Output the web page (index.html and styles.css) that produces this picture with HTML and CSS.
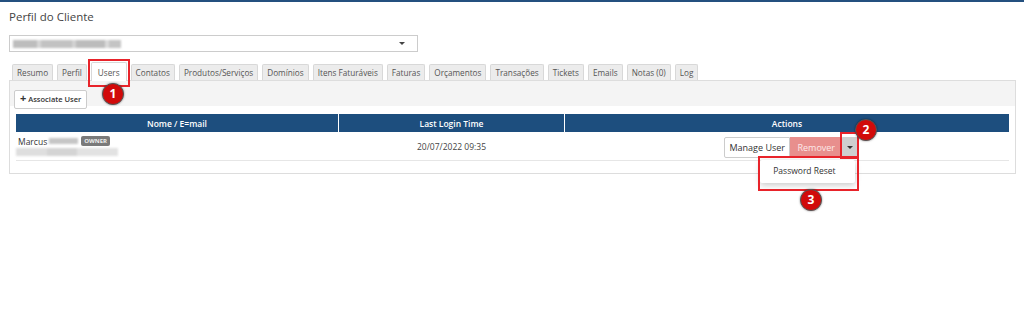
FILE: index.html
```html
<!DOCTYPE html>
<html lang="pt">
<head>
    <meta charset="UTF-8">
    <title>Perfil do Cliente</title>
    <link rel="stylesheet" href="styles.css">
</head>
<body>

    <div class="topline"></div>

    <div class="page">
        <h1 class="page-title">Perfil do Cliente</h1>

        <div class="client-select">
            <span class="blur blur-client"></span>
            <span class="select-caret"></span>
        </div>

        <ul class="tabs">
            <li>Resumo</li>
            <li>Perfil</li>
            <li class="active">Users</li>
            <li>Contatos</li>
            <li>Produtos/Serviços</li>
            <li>Domínios</li>
            <li>Itens Faturáveis</li>
            <li>Faturas</li>
            <li>Orçamentos</li>
            <li>Transações</li>
            <li>Tickets</li>
            <li>Emails</li>
            <li>Notas (0)</li>
            <li>Log</li>
        </ul>

        <div class="tab-pane">
            <div class="toolbar">
                <button class="btn-assoc"><span class="plus">+</span> Associate User</button>
            </div>

            <div class="pane-body">
                <table class="users-table">
                    <thead>
                        <tr>
                            <th class="col-name">Nome / E=mail</th>
                            <th class="col-date">Last Login Time</th>
                            <th>Actions</th>
                        </tr>
                    </thead>
                    <tbody>
                        <tr>
                            <td class="user-cell">
                                <div class="user-line">
                                    Marcus <span class="blur blur-surname"></span>
                                    <span class="badge">OWNER</span>
                                </div>
                                <div class="blur blur-email"></div>
                            </td>
                            <td class="date-cell">20/07/2022 09:35</td>
                            <td class="actions-cell">
                                <div class="btn-group">
                                    <button class="btn btn-manage">Manage User</button>
                                    <button class="btn btn-remove">Remover</button>
                                    <button class="btn btn-caret"><span class="caret"></span></button>
                                    <ul class="dropdown">
                                        <li>Password Reset</li>
                                    </ul>
                                </div>
                            </td>
                        </tr>
                    </tbody>
                </table>
            </div>
        </div>
    </div>

    <!-- annotations -->
    <div class="mark-box box-1"></div>
    <div class="mark-box box-2"></div>
    <div class="mark-box box-3"></div>
    <div class="mark-num num-1">1</div>
    <div class="mark-num num-2">2</div>
    <div class="mark-num num-3">3</div>

</body>
</html>
```

FILE: styles.css
```css
body {
    font-family: 'Open Sans', 'Liberation Sans', sans-serif;
    background: #fff;
    color: #333;
    margin: 0;
    position: relative;
    height: 320px;
    overflow: hidden;
}

.topline {
    height: 2px;
    background: #24507f;
}

.page {
    padding: 0 8px 0 9px;
}

.page-title {
    font-size: 11.5px;
    font-weight: normal;
    color: #444;
    line-height: 18px;
    margin: 6px 0 9px;
}

.client-select {
    width: 392px;
    height: 15px;
    border: 1px solid #ccc;
    display: flex;
    align-items: center;
    justify-content: space-between;
    padding: 0 12px 0 3px;
}

.blur {
    display: inline-block;
    background: #cfcfcf;
    filter: blur(1.2px);
}

.blur-client {
    width: 108px;
    height: 8px;
    background: linear-gradient(to right, #bdbdbd 0 22%, #d6d6d6 22% 26%, #c2c2c2 26% 55%, #d2d2d2 55% 58%, #bcbcbc 58% 85%, #dadada 85% 89%, #c4c4c4 89%);
}

.select-caret {
    width: 0;
    height: 0;
    border-left: 3px solid transparent;
    border-right: 3px solid transparent;
    border-top: 3px solid #444;
}

.tabs {
    list-style: none;
    margin: 10px 0 0;
    padding: 0 0 0 3px;
    display: flex;
    align-items: flex-end;
    gap: 4px;
    position: relative;
    z-index: 1;
}

.tabs li {
    font-size: 8.2px;
    color: #555;
    background: #ececec;
    border: 1px solid #d8d8d8;
    border-bottom: none;
    border-radius: 2px 2px 0 0;
    height: 15px;
    line-height: 16px;
    padding: 0 4px;
}

.tabs li.active {
    background: #fff;
    height: 18px;
    line-height: 20px;
    margin-bottom: -1px;
    padding: 0 6px;
}

.tab-pane {
    border: 1px solid #ddd;
}

.toolbar {
    background: #f4f4f4;
    padding: 4px 4px 2px;
    height: 19px;
}

.btn-assoc {
    font-family: inherit;
    font-size: 7.5px;
    font-weight: 600;
    color: #333;
    background: #fff;
    border: 1px solid #ccc;
    border-radius: 2px;
    height: 19px;
    padding: 0 5px 0 5px;
}

.btn-assoc .plus {
    font-weight: bold;
    font-size: 11px;
    line-height: 8px;
}

.pane-body {
    padding: 8px 6px 12px;
}

.users-table {
    width: 100%;
    border-collapse: collapse;
}

.users-table th {
    background: #1d4e7e;
    color: #fff;
    font-size: 8.5px;
    font-weight: 600;
    height: 18px;
    padding: 0;
    border-left: 1px solid #fff;
}

.users-table th:first-child {
    border-left: none;
}

.col-name {
    width: 322px;
}

.col-date {
    width: 225px;
}

.users-table td {
    height: 28px;
    border-bottom: 1px solid #e6e6e6;
    padding: 0;
}

.user-cell {
    padding-left: 2px !important;
    vertical-align: top;
}

.user-line {
    font-size: 8.5px;
    margin-top: 4px;
    display: flex;
    align-items: center;
    gap: 2px;
    height: 10px;
}

.blur-surname {
    width: 29px;
    height: 6px;
    background: #c6c6c6;
}

.badge {
    background: #7a7a7a;
    color: #eee;
    font-size: 6px;
    font-weight: bold;
    padding: 2px 3px;
    border-radius: 2px;
    line-height: 6px;
    margin-left: 1px;
}

.blur-email {
    display: block;
    width: 102px;
    height: 8px;
    margin-top: 2px;
    margin-left: -2px;
    background: linear-gradient(to right, #dedede 0 30%, #d4d4d4 30% 60%, #e2e2e2 60%);
}

.date-cell {
    text-align: center;
    font-size: 8.5px;
    color: #444;
}

.actions-cell {
    text-align: center;
    padding-left: 9px !important;
}

.btn-group {
    display: inline-flex;
    position: relative;
    vertical-align: middle;
}

.btn {
    font-family: inherit;
    font-size: 9px;
    height: 21px;
    border: 1px solid #ccc;
    margin: 0;
    padding: 0;
    white-space: nowrap;
}

.btn-manage {
    background: #fff;
    color: #333;
    border-radius: 2px 0 0 2px;
    width: 66px;
}

.btn-remove {
    background: #e88f8d;
    border-color: #e88f8d;
    color: #fde9e9;
    width: 52px;
}

.btn-caret {
    background: #cfcfcf;
    border-color: #cfcfcf;
    width: 16px;
    border-radius: 0 2px 2px 0;
    display: flex;
    align-items: center;
    justify-content: center;
}

.caret {
    width: 0;
    height: 0;
    border-left: 3px solid transparent;
    border-right: 3px solid transparent;
    border-top: 3px solid #333;
}

.dropdown {
    list-style: none;
    margin: 0;
    padding: 0;
    position: absolute;
    top: 23px;
    left: 36px;
    width: 95px;
    height: 23px;
    background: #fff;
    border-radius: 2px;
    box-shadow: 0 2px 6px rgba(0, 0, 0, 0.22);
    text-align: left;
}

.dropdown li {
    font-size: 8.5px;
    color: #333;
    line-height: 21px;
    padding-left: 13px;
}

.mark-box {
    position: absolute;
    border: 2px solid #e8232a;
    box-sizing: border-box;
}

.box-1 {
    left: 88px;
    top: 59px;
    width: 42px;
    height: 28px;
}

.box-2 {
    left: 840px;
    top: 132px;
    width: 19px;
    height: 27px;
}

.box-3 {
    left: 758px;
    top: 156px;
    width: 101px;
    height: 35px;
}

.mark-num {
    position: absolute;
    width: 22px;
    height: 22px;
    border-radius: 50%;
    background: #d10a0a;
    border: 1.5px solid #555;
    box-sizing: border-box;
    box-shadow: 0 0 2px rgba(0, 0, 0, 0.5);
    color: #fff;
    font-weight: bold;
    font-size: 12px;
    line-height: 19px;
    text-align: center;
}

.num-1 {
    left: 102px;
    top: 83px;
}

.num-2 {
    left: 855px;
    top: 119px;
}

.num-3 {
    left: 800px;
    top: 189px;
}
```
